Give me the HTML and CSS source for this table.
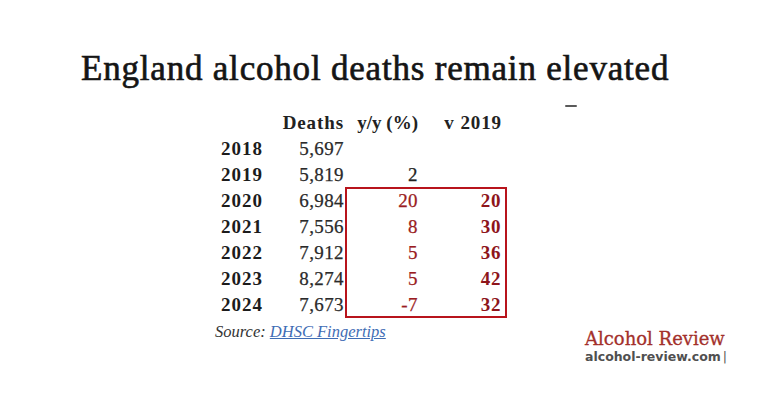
FILE: index.html
```html
<!DOCTYPE html>
<html lang="en">
<head>
<meta charset="utf-8">
<title>England alcohol deaths remain elevated</title>
<link rel="stylesheet" href="styles.css">
</head>
<body>
<div class="page">
  <h1 class="title">England alcohol deaths remain elevated</h1>
  <div class="dash"></div>
  <div class="table">
    <div class="hd c2">Deaths</div>
    <div class="hd c3">y/y (%)</div>
    <div class="hd c4">v 2019</div>

    <div class="yr">2018</div><div class="num">5,697</div><div class="yy"></div><div class="vs"></div>
    <div class="yr">2019</div><div class="num">5,819</div><div class="yy plain">2</div><div class="vs"></div>
    <div class="yr">2020</div><div class="num">6,984</div><div class="yy">20</div><div class="vs">20</div>
    <div class="yr">2021</div><div class="num">7,556</div><div class="yy">8</div><div class="vs">30</div>
    <div class="yr">2022</div><div class="num">7,912</div><div class="yy">5</div><div class="vs">36</div>
    <div class="yr">2023</div><div class="num">8,274</div><div class="yy">5</div><div class="vs">42</div>
    <div class="yr">2024</div><div class="num">7,673</div><div class="yy">-7</div><div class="vs">32</div>

    <div class="box"></div>
  </div>
  <div class="bottom">
    <div class="source">Source: <a href="#">DHSC Fingertips</a></div>
    <div class="brand">
      <div class="brand-name">Alcohol Review</div>
      <div class="brand-url">alcohol-review.com<span class="bar">|</span></div>
    </div>
  </div>
</div>
</body>
</html>
```

FILE: styles.css
```css
html, body {
  margin: 0;
  padding: 0;
  background: #ffffff;
}

.page {
  width: 768px;
  height: 401px;
  overflow: hidden;
  background: #ffffff;
  padding-top: 49px;
  box-sizing: border-box;
}

.title {
  margin: 0;
  padding-left: 81px;
  font-family: "Liberation Serif", "Times New Roman", serif;
  font-weight: 400;
  font-size: 35px;
  line-height: 40px;
  letter-spacing: 0.8px;
  color: #151515;
  -webkit-text-stroke: 0.65px #151515;
  white-space: nowrap;
}

.dash {
  width: 12px;
  height: 2px;
  margin: 16px 0 0 565px;
  background: #5a5a5a;
  border-radius: 1px;
}

.table {
  margin: 3px 0 0 210px;
  width: 298px;
  display: grid;
  grid-template-columns: 53px 81px 74px 90px;
  grid-auto-rows: 26px;
  font-family: "Liberation Serif", "Times New Roman", serif;
  font-size: 19px;
  line-height: 26px;
  color: #222222;
  position: relative;
}

.table > div {
  text-align: right;
  white-space: nowrap;
}

.hd {
  font-weight: 700;
  letter-spacing: 0.9px;
}

.hd.c2 { grid-column: 2; }
.hd.c3 { grid-column: 3; letter-spacing: 0; }
.hd.c4 { grid-column: 4; padding-right: 6px; }

.yr {
  grid-column: 1;
  font-weight: 700;
  letter-spacing: 1px;
  color: #1c1c1c;
}

.num {
  letter-spacing: 0.4px;
  color: #2a2a2a;
  -webkit-text-stroke: 0.25px #2a2a2a;
}

.yy {
  color: #9a1c22;
  letter-spacing: 0.4px;
  -webkit-text-stroke: 0.25px #9a1c22;
}

.yy.plain {
  color: #222222;
  -webkit-text-stroke: 0.25px #222222;
}

.vs {
  font-weight: 700;
  color: #8e151b;
  letter-spacing: 0.6px;
  padding-right: 7px;
}

/* highlight frame laid over the 2020–2024 comparison cells */
.table > .box {
  position: absolute;
  left: 135px;
  top: 77px;
  width: 162px;
  height: 131px;
  box-sizing: border-box;
  border: 2px solid #b8141c;
  pointer-events: none;
}

.bottom {
  display: flex;
  align-items: flex-start;
  margin-top: 4px;
  padding-left: 215px;
}

.source {
  width: 370px;
  font-family: "Liberation Serif", "Times New Roman", serif;
  font-style: italic;
  font-size: 16.5px;
  line-height: 20px;
  color: #333333;
}

.source a {
  color: #3f6db5;
  text-decoration: underline;
}

.brand {
  margin-top: 7px;
}

.brand-name {
  font-family: "DejaVu Serif", Georgia, serif;
  font-size: 18px;
  line-height: 20px;
  color: #a3302b;
  -webkit-text-stroke: 0.3px #a3302b;
  white-space: nowrap;
}

.brand-url {
  font-family: "DejaVu Sans", Verdana, sans-serif;
  font-weight: 700;
  font-size: 12.5px;
  line-height: 16px;
  color: #505050;
  white-space: nowrap;
}

.bar {
  font-weight: 400;
  margin-left: 2px;
  color: #555555;
}
```
